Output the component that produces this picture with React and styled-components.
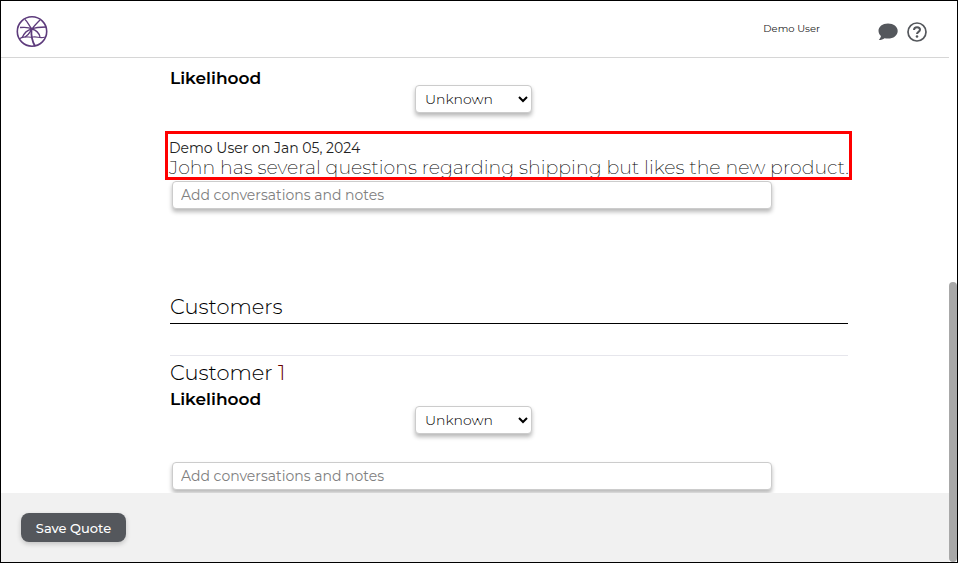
import React from "react";
import styled, { createGlobalStyle } from "styled-components";

const GlobalStyle = createGlobalStyle`
  *, *::before, *::after { box-sizing: border-box; }
  body { margin: 0; background: #fff; }
  body, button, input, select { font-family: Montserrat, Inter, sans-serif; }
`;

const Window = styled.div`
  display: flex;
  height: 100vh;
  border: 1px solid #000;
  color: #000;
  background: #fff;
`;

const Page = styled.div`
  flex: 1;
  min-width: 0;
  display: flex;
  flex-direction: column;
`;

const ScrollTrack = styled.div`
  width: 8px;
  display: flex;
  flex-direction: column;
  justify-content: flex-end;
`;

const ScrollThumb = styled.div`
  height: 50%;
  border-radius: 4px;
  background: #a8a8a8;
`;

const Header = styled.header`
  flex: none;
  display: flex;
  align-items: center;
  height: 57px;
  padding: 5px 22px 0 14px;
  border-bottom: 1px solid #d6d6d6;
`;

const HomeLink = styled.a`
  display: flex;
  margin-right: auto;
`;

const UserName = styled.span`
  margin: 0 58px 6px 0;
  font-size: 10px;
  line-height: 16px;
  font-weight: 400;
  color: #222;
`;

const HeaderActions = styled.div`
  display: flex;
  gap: 9px;
`;

const IconButton = styled.button`
  display: flex;
  padding: 0;
  border: 0;
  background: none;
  color: #54575c;
`;

const Content = styled.main`
  flex: 1;
  min-height: 0;
  overflow: hidden;
  padding: 10px 101px 0 169px;
`;

const LikelihoodRow = styled.div`
  display: grid;
  grid-template-columns: 245px auto;
  justify-content: start;
  align-items: start;
`;

const Label = styled.label`
  font-size: 17px;
  line-height: 20px;
  font-weight: 600;
`;

const Select = styled.select`
  width: 117px;
  height: 28px;
  margin-top: 17px;
  padding: 0 5px;
  border: 1px solid #ccc;
  border-radius: 4px;
  background-color: #fff;
  box-shadow: 0 3px 4px rgba(0, 0, 0, 0.28);
  color: #000;
  font-size: 14px;
  font-weight: 300;
`;

const Highlight = styled.section`
  margin: 18px -4px 1px -5px;
  padding: 4px 0 0 1px;
  border: 3px solid #f00;
  overflow: hidden;
  white-space: nowrap;
`;

const NoteMeta = styled.p`
  margin: 0;
  font-size: 14px;
  line-height: 20px;
  font-weight: 400;
  color: #222;
`;

const NoteText = styled.p`
  margin: 0;
  font-size: 19px;
  line-height: 19px;
  font-weight: 200;
`;

const NoteInput = styled.input`
  display: block;
  width: 600px;
  max-width: 100%;
  height: 28px;
  margin: ${(p) => (p.$spaced ? "28px" : "0")} 0 0 2px;
  padding: 0 8px;
  border: 1px solid #ccc;
  border-radius: 4px;
  background: #fff;
  box-shadow: 0 3px 4px rgba(0, 0, 0, 0.28);
  font-size: 14px;
  font-weight: 400;
  &::placeholder { color: #808080; }
`;

const SectionTitle = styled.h2`
  margin: 86px 0 31px;
  padding-bottom: 4px;
  border-bottom: 1px solid #000;
  font-size: 21px;
  line-height: 24px;
  font-weight: 300;
`;

const Customer = styled.section`
  border-top: 1px solid #e6e6ec;
`;

const CustomerTitle = styled.h3`
  margin: 5px 0 4px;
  font-size: 21px;
  line-height: 24px;
  font-weight: 300;
`;

const CustomerNumber = styled.span`
  color: #600;
`;

const Footer = styled.footer`
  flex: none;
  padding: 20px;
  background: #f1f1f1;
`;

const SaveButton = styled.button`
  display: block;
  width: 105px;
  height: 29px;
  padding: 0;
  border: 0;
  border-radius: 8px;
  background: #54575c;
  box-shadow: 0 2px 5px rgba(0, 0, 0, 0.2);
  color: #fff;
  font-size: 13px;
  font-weight: 500;
`;

function PalmLogo() {
  return (
    <svg width="34" height="34" viewBox="0 0 34 34" fill="none" stroke="#5d3b7c" aria-hidden="true">
      <circle cx="17" cy="16.500" r="14.7" strokeWidth="1.6" />
      <path strokeWidth="1.3" d="M10 4.500C13 7 14 11 17 14M5 12.500C10 12 14 12 17 14M17 14C21 12 26 12 31 12M17 14C19 11 22 8 25 5M17 14C12 15 9 18 7 23M17 14C21 15 24 18 25 22M17 14C15 17 14 20 10 22" />
      <path strokeWidth="1.1" d="M4 24C9 20 14 23 18 22S25 24 30 22" />
      <path strokeWidth="1.8" d="M16.500 14C16 20 17 26 20 31" />
    </svg>
  );
}

function ChatIcon() {
  return (
    <svg width="20" height="20" viewBox="0 0 20 20" fill="currentColor" aria-hidden="true">
      <path d="M10 1.500C4.500 1.500.5 4.700.5 8.800c0 2.200 1 4 2.500 5.300-.3 1.500-1 2.800-2.200 4 2.500 0 4.300-.8 5.700-1.900 1.100.3 2.300.4 3.500.4 5.500 0 9.700-3.400 9.700-7.700S15.500 1.500 10 1.500Z" />
    </svg>
  );
}

function HelpIcon() {
  return (
    <svg width="20" height="20" viewBox="0 0 20 20" fill="none" stroke="currentColor" aria-hidden="true">
      <circle cx="10" cy="10" r="9" strokeWidth="1.7" />
      <path strokeWidth="2" d="M7 8c0-1.900 1.300-2.800 3-2.800s3 .9 3 2.500c0 2.200-3 2.100-3 4.300" />
      <circle cx="10" cy="14.500" r="1.3" fill="currentColor" stroke="none" />
    </svg>
  );
}

function Likelihood({ id }) {
  return (
    <LikelihoodRow>
      <Label htmlFor={id}>Likelihood</Label>
      <Select id={id} defaultValue="Unknown">
        <option>Unknown</option>
      </Select>
    </LikelihoodRow>
  );
}

export default function App() {
  return (
    <>
      <GlobalStyle />
      <Window>
        <Page>
          <Header>
            <HomeLink href="#" aria-label="Home"><PalmLogo /></HomeLink>
            <UserName>Demo User</UserName>
            <HeaderActions>
              <IconButton type="button" aria-label="Messages"><ChatIcon /></IconButton>
              <IconButton type="button" aria-label="Help"><HelpIcon /></IconButton>
            </HeaderActions>
          </Header>
          <Content>
            <Likelihood id="quote-likelihood" />
            <Highlight>
              <NoteMeta>Demo User on Jan 05, 2024</NoteMeta>
              <NoteText>John has several questions regarding shipping but likes the new product.</NoteText>
            </Highlight>
            <NoteInput aria-label="Quote notes" placeholder="Add conversations and notes" />
            <SectionTitle>Customers</SectionTitle>
            <Customer>
              <CustomerTitle>Customer <CustomerNumber>1</CustomerNumber></CustomerTitle>
              <Likelihood id="customer-likelihood" />
              <NoteInput $spaced aria-label="Customer notes" placeholder="Add conversations and notes" />
            </Customer>
          </Content>
          <Footer>
            <SaveButton type="button">Save Quote</SaveButton>
          </Footer>
        </Page>
        <ScrollTrack aria-hidden="true"><ScrollThumb /></ScrollTrack>
      </Window>
    </>
  );
}
